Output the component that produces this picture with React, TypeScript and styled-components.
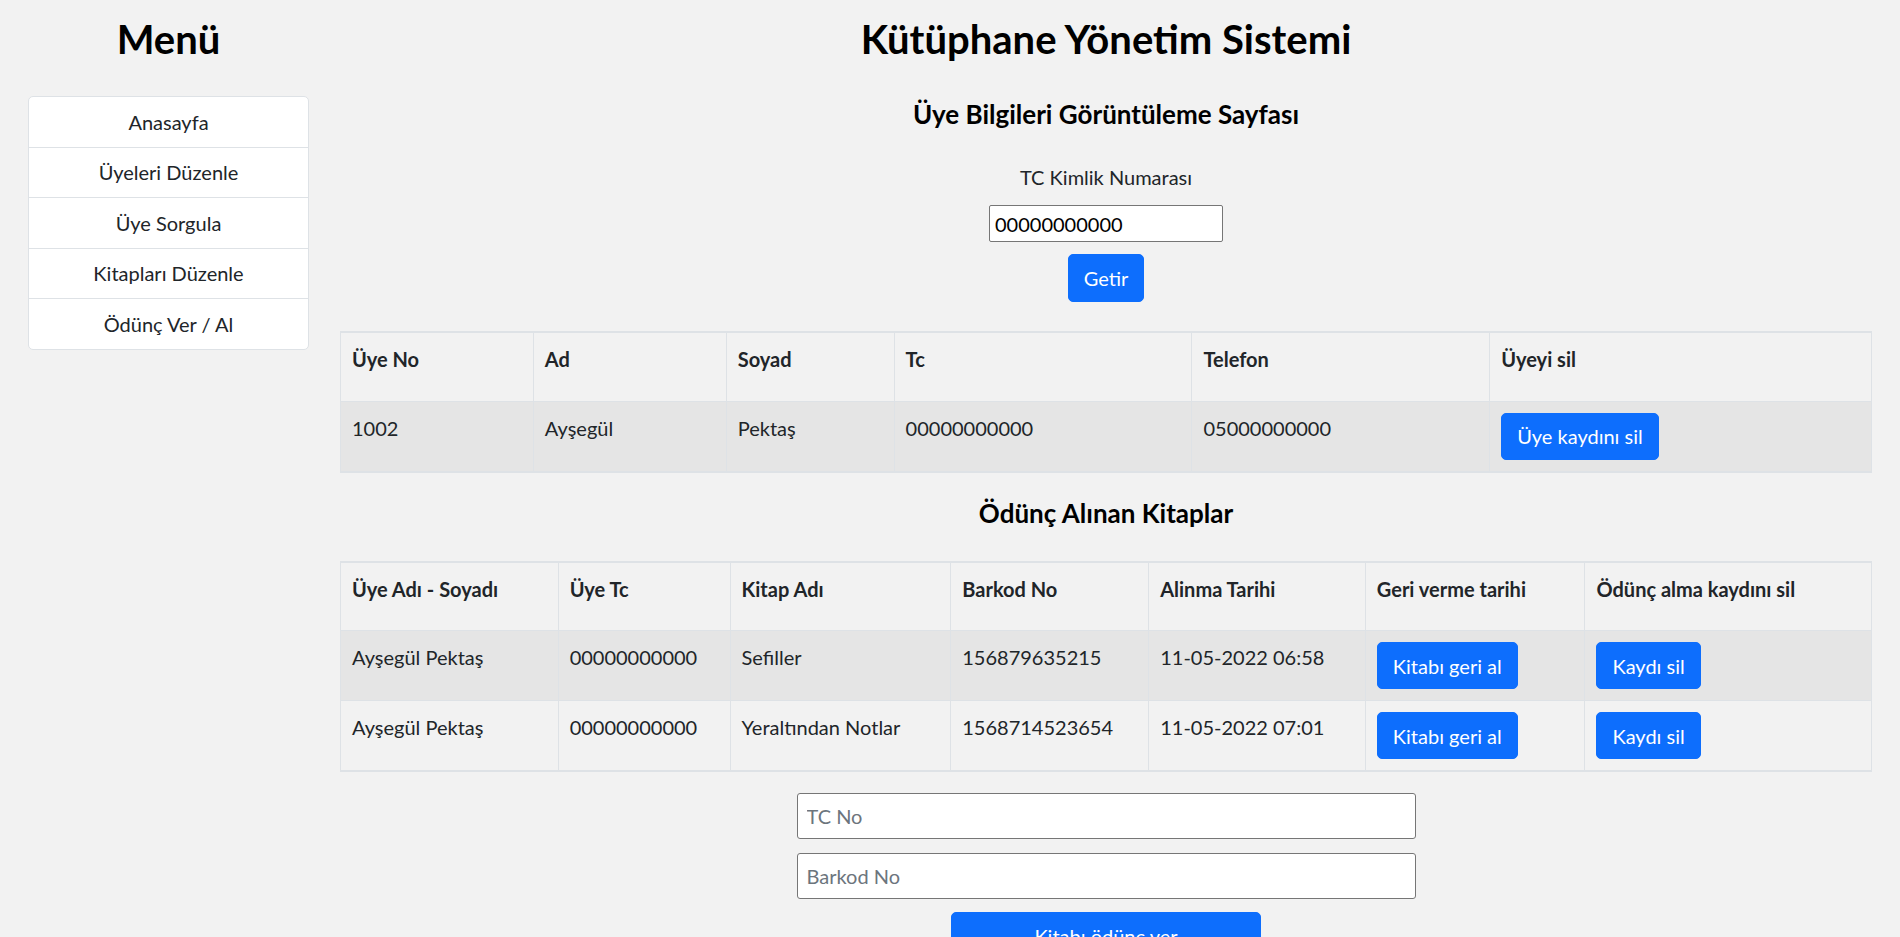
import styled, { createGlobalStyle } from 'styled-components';

const GlobalStyle = createGlobalStyle`
    html {
        overflow: hidden;
    }
    body {
        margin: 0;
        background-color: #f2f2f2;
        color: #212529;
        font-family: Lato, 'Noto Sans', sans-serif;
        font-size: 20px;
        line-height: 30px;
    }
    * {
        box-sizing: border-box;
    }
`;

const PageStyles = styled.div`
    display: grid;
    grid-template-columns: 281px 1fr;
    column-gap: 31px;
    padding: 0 28px;
`;

const SidebarStyles = styled.aside`
    display: flex;
    flex-direction: column;
`;

const BigTitle = styled.h1<{ $bottom: number }>`
    margin: 15px 0 ${(p) => p.$bottom}px;
    font-size: 40px;
    line-height: 48px;
    font-weight: 700;
    color: #000;
    text-align: center;
`;

const MenuList = styled.ul`
    list-style: none;
    margin: 0;
    padding: 0;
    background-color: #fff;
    border: 1px solid #dee2e6;
    border-radius: 5px;
    overflow: hidden;
`;

const MenuItem = styled.li`
    height: 50.5px;
    display: flex;
    align-items: center;
    justify-content: center;
    border-top: 1px solid #dee2e6;
    &:first-child {
        border-top: none;
        height: 49.5px;
    }
`;

const MainStyles = styled.main`
    display: flex;
    flex-direction: column;
    align-items: center;
    min-width: 0;
`;

const SubTitle = styled.h2<{ $top: number; $bottom: number }>`
    margin: ${(p) => p.$top}px 0 ${(p) => p.$bottom}px;
    font-size: 26px;
    line-height: 1.2;
    font-weight: 700;
    color: #000;
    text-align: center;
`;

const Label = styled.label`
    display: block;
    margin-bottom: 13px;
`;

const SmallInput = styled.input`
    width: 234px;
    height: 37px;
    padding: 0 5px;
    border: 1px solid #767676;
    border-radius: 2px;
    background: #fff;
    font-family: inherit;
    font-size: 20px;
    color: #000;
`;

const Button = styled.button<{ $width?: number; $height?: number }>`
    height: ${(p) => p.$height ?? 47}px;
    width: ${(p) => (p.$width ? `${p.$width}px` : 'auto')};
    padding: 0 15px;
    border: 1px solid #0d6efd;
    border-radius: 5px;
    background-color: #0d6efd;
    color: #fff;
    font-family: inherit;
    font-size: 20px;
    line-height: 30px;
    cursor: pointer;
`;

const Table = styled.table<{ $top: number }>`
    width: 100%;
    margin-top: ${(p) => p.$top}px;
    border-collapse: collapse;
    border-top: 2px solid #dee2e6;
    border-bottom: 2px solid #dee2e6;
    tr {
        height: 69px;
    }
    th,
    td {
        padding: 11px;
        vertical-align: top;
        text-align: left;
        border: 1px solid #dee2e6;
    }
    th {
        font-weight: 700;
    }
    tbody tr:nth-child(odd) {
        background-color: rgba(0, 0, 0, 0.05);
    }
`;

const Col = styled.col<{ $w: number }>`
    width: ${(p) => p.$w}px;
`;

const BorrowForm = styled.form`
    display: flex;
    flex-direction: column;
    align-items: center;
    gap: 14px;
    margin-top: 21px;
    .actions {
        margin-top: -1px;
    }
`;

const WideInput = styled.input`
    width: 619px;
    height: 46px;
    padding: 0 9px;
    border: 1px solid #767676;
    border-radius: 3px;
    background: #fff;
    font-family: inherit;
    font-size: 20px;
    color: #212529;
    &::placeholder {
        color: #6c757d;
    }
`;

const menuLinks = ['Anasayfa', 'Üyeleri Düzenle', 'Üye Sorgula', 'Kitapları Düzenle', 'Ödünç Ver / Al'];

const loans = [
    { name: 'Ayşegül Pektaş', tc: '00000000000', book: 'Sefiller', barcode: '156879635215', date: '11-05-2022 06:58' },
    { name: 'Ayşegül Pektaş', tc: '00000000000', book: 'Yeraltından Notlar', barcode: '1568714523654', date: '11-05-2022 07:01' },
];

const App = () => {
    return (
        <>
            <GlobalStyle />
            <PageStyles>
                <SidebarStyles>
                    <BigTitle $bottom={33}>Menü</BigTitle>
                    <MenuList>
                        {menuLinks.map((link) => (
                            <MenuItem key={link}>{link}</MenuItem>
                        ))}
                    </MenuList>
                </SidebarStyles>
                <MainStyles>
                    <BigTitle $bottom={34}>Kütüphane Yönetim Sistemi</BigTitle>
                    <SubTitle $top={2} $bottom={32}>
                        Üye Bilgileri Görüntüleme Sayfası
                    </SubTitle>
                    <Label htmlFor="tc">TC Kimlik Numarası</Label>
                    <SmallInput id="tc" defaultValue="00000000000" />
                    <Button $height={48} style={{ marginTop: 12 }}>
                        Getir
                    </Button>
                    <Table $top={29}>
                        <colgroup>
                            {[193, 193, 168, 298, 298, 382].map((w, i) => (
                                <Col key={i} $w={w} />
                            ))}
                        </colgroup>
                        <thead>
                            <tr>
                                <th>Üye No</th>
                                <th>Ad</th>
                                <th>Soyad</th>
                                <th>Tc</th>
                                <th>Telefon</th>
                                <th>Üyeyi sil</th>
                            </tr>
                        </thead>
                        <tbody>
                            <tr>
                                <td>1002</td>
                                <td>Ayşegül</td>
                                <td>Pektaş</td>
                                <td>00000000000</td>
                                <td>05000000000</td>
                                <td>
                                    <Button>Üye kaydını sil</Button>
                                </td>
                            </tr>
                        </tbody>
                    </Table>
                    <SubTitle $top={25} $bottom={32}>
                        Ödünç Alınan Kitaplar
                    </SubTitle>
                    <Table $top={0}>
                        <colgroup>
                            {[218, 172, 221, 198, 217, 220, 287].map((w, i) => (
                                <Col key={i} $w={w} />
                            ))}
                        </colgroup>
                        <thead>
                            <tr>
                                <th>Üye Adı - Soyadı</th>
                                <th>Üye Tc</th>
                                <th>Kitap Adı</th>
                                <th>Barkod No</th>
                                <th>Alinma Tarihi</th>
                                <th>Geri verme tarihi</th>
                                <th>Ödünç alma kaydını sil</th>
                            </tr>
                        </thead>
                        <tbody>
                            {loans.map((loan) => (
                                <tr key={loan.barcode}>
                                    <td>{loan.name}</td>
                                    <td>{loan.tc}</td>
                                    <td>{loan.book}</td>
                                    <td>{loan.barcode}</td>
                                    <td>{loan.date}</td>
                                    <td>
                                        <Button>Kitabı geri al</Button>
                                    </td>
                                    <td>
                                        <Button>Kaydı sil</Button>
                                    </td>
                                </tr>
                            ))}
                        </tbody>
                    </Table>
                    <BorrowForm onSubmit={(e) => e.preventDefault()}>
                        <WideInput placeholder="TC No" />
                        <WideInput placeholder="Barkod No" />
                        <Button className="actions" $width={310} $height={48}>
                            Kitabı ödünç ver
                        </Button>
                    </BorrowForm>
                </MainStyles>
            </PageStyles>
        </>
    );
};

export default App;
